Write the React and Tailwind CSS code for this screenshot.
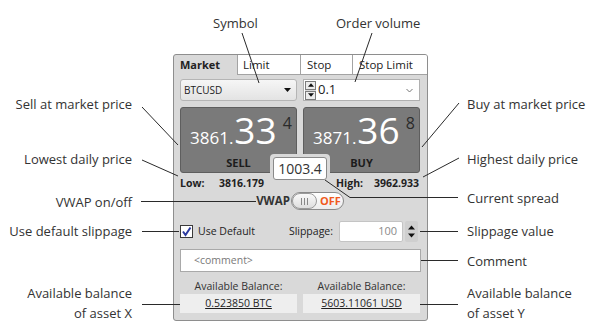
import React from 'react';

const font = { fontFamily: '"Open Sans", "Noto Sans", sans-serif' };

const Tri = ({ up, w = 7, h = 4 }) => (
  <svg width={w} height={h} viewBox="0 0 7 4">
    <path d={up ? 'M0 4 L3.5 0 L7 4Z' : 'M0 0 L7 0 L3.5 4Z'} fill="#111" />
  </svg>
);

const PriceButton = ({ head, big, tail, label }) => (
  <div className="w-[117px] h-[66px] flex flex-col bg-[#7a7a7a] border border-[#5e5e5e] rounded-[3px]">
    <div className="flex items-baseline pl-[9px] pt-[3px]">
      <span className="text-[17px] leading-none text-white">{head}</span>
      <span className="text-[37px] leading-none text-white ml-[1px]">{big}</span>
      <span className="self-start mt-[4px] ml-[6px] text-[16px] leading-none text-[#2a2a2a]">{tail}</span>
    </div>
    <div className="mt-auto pb-[2px] text-center text-[11px] leading-[14px] font-bold text-[#1c1c1c]">{label}</div>
  </div>
);

const TradePanel = () => (
  <div className="w-[255px] h-[267px] flex flex-col bg-[#d9d9d9] border border-[#8e8e8e] rounded-[3px] overflow-hidden text-[#222]">
    <div className="flex h-[20px] shrink-0 text-[11.5px] leading-[19px]">
      <div className="w-[63px] pl-[6px] font-bold text-[11px]">Market</div>
      <div className="w-[63px] pl-[5px] bg-white border-l border-b border-[#a3a3a3]">Limit</div>
      <div className="w-[52px] pl-[6px] bg-white border-l border-b border-[#a3a3a3]">Stop</div>
      <div className="w-[75px] pl-[6px] bg-white border-l border-b border-[#a3a3a3]">Stop Limit</div>
    </div>

    <div className="flex flex-col pl-[6px] w-[246px]">
      <div className="flex gap-[6px] mt-[4px] h-[22px]">
        <div className="w-[117px] flex items-center justify-between pl-[3px] pr-[5px] rounded-[3px] border border-[#b5b5b5] bg-gradient-to-b from-[#f6f6f6] to-[#e3e3e3]">
          <span className="text-[10px]">BTCUSD</span>
          <Tri />
        </div>
        <div className="w-[117px] flex items-center bg-white border border-[#b0b0b0]">
          <div className="flex flex-col gap-[1px] ml-[1px] bg-[#d9d9d9]">
            <div className="w-[11px] h-[9px] flex items-center justify-center border border-[#7c7c7c] bg-[#ececec]"><Tri up w={6} h={4} /></div>
            <div className="w-[11px] h-[9px] flex items-center justify-center border border-[#7c7c7c] bg-[#ececec]"><Tri w={6} h={4} /></div>
          </div>
          <span className="ml-[2px] text-[13px]">0.1</span>
          <svg className="ml-auto mr-[6px]" width="7" height="5" viewBox="0 0 7 5">
            <path d="M0.5 1 L3.5 4 L6.5 1" fill="none" stroke="#777" strokeWidth="1" />
          </svg>
        </div>
      </div>

      <div className="relative flex gap-[6px] mt-[6px]">
        <PriceButton head="3861." big="33" tail="4" label="SELL" />
        <PriceButton head="3871." big="36" tail="8" label="BUY" />
        <div className="absolute left-[90px] top-[47px] p-[3px] bg-[#d9d9d9] rounded-[4px]">
          <div className="w-[54px] h-[23px] flex items-center justify-center bg-white border border-[#8a8a8a] rounded-[3px] text-[14px] text-[#333]">1003.4</div>
        </div>
      </div>

      <div className="flex mt-[3px] h-[14px] text-[10.5px] leading-[14px] font-bold">
        <div className="w-[123px] flex">
          <span className="w-[39px]">Low:</span>
          <span>3816.179</span>
        </div>
        <div className="flex pl-[33px]">
          <span className="w-[38px]">High:</span>
          <span>3962.933</span>
        </div>
      </div>

      <div className="flex justify-center items-center mt-[2px] h-[18px]">
        <span className="text-[11.5px] font-bold text-[#333] mr-[1px]">VWAP</span>
        <div className="w-[53px] h-[18px] flex items-center rounded-full border border-[#8a8a8a] bg-gradient-to-b from-white to-[#ececec]">
          <div className="w-[25px] h-[16px] flex items-center justify-center gap-[2px] rounded-full border border-[#9a9a9a] bg-gradient-to-b from-[#fafafa] to-[#dedede]">
            <span className="w-px h-[7px] bg-[#888]" />
            <span className="w-px h-[7px] bg-[#888]" />
            <span className="w-px h-[7px] bg-[#888]" />
          </div>
          <span className="ml-[3px] text-[11px] font-bold text-[#f05a1e]">OFF</span>
        </div>
      </div>

      <div className="flex items-center mt-[11px] h-[21px] w-[240px]">
        <div className="w-[13px] h-[13px] flex items-center justify-center bg-white border border-[#3a3a3a]">
          <svg width="11" height="11" viewBox="0 0 11 11">
            <path d="M2 5.5 L4.5 9 L9.5 1.5" fill="none" stroke="#2b3aa0" strokeWidth="2" />
          </svg>
        </div>
        <span className="ml-[5px] text-[10.5px]">Use Default</span>
        <span className="ml-auto text-[10.5px]">Slippage:</span>
        <div className="ml-[6px] w-[64px] h-[21px] flex items-center justify-end pr-[5px] bg-white border border-[#c4c4c4] rounded-[2px] text-[11px] text-[#8a8a8a]">100</div>
        <div className="ml-[2px] mr-[2px] w-[13px] h-[21px] flex flex-col items-center justify-center gap-[3px] bg-[#cfcfcf] rounded-[2px]">
          <Tri up w={7} h={5} />
          <Tri w={7} h={5} />
        </div>
      </div>

      <div className="mt-[7px] h-[23px] w-[241px] flex items-center pl-[13px] bg-white border border-[#a9a9a9] text-[10.5px] text-[#7a7a7a]">&lt;comment&gt;</div>

      <div className="grid grid-cols-2 gap-x-[6px] mt-[7px] text-[10.5px] text-[#333]">
        <div className="h-[14px] leading-[14px] text-center">Available Balance:</div>
        <div className="h-[14px] leading-[14px] text-center">Available Balance:</div>
        <div className="mt-[1px] h-[19px] leading-[19px] bg-[#eeeeee] text-center text-[#1f1f1f] underline">0.523850 BTC</div>
        <div className="mt-[1px] h-[19px] leading-[19px] bg-[#eeeeee] text-center text-[#1f1f1f] underline">5603.11061 USD</div>
      </div>
    </div>
  </div>
);

const leftNotes = [
  { text: 'Sell at market price', top: 94 },
  { text: 'Lowest daily price', top: 149 },
  { text: 'VWAP on/off', top: 192 },
  { text: 'Use default slippage', top: 221 },
];

const rightNotes = [
  { text: 'Buy at market price', top: 94 },
  { text: 'Highest daily price', top: 149 },
  { text: 'Current spread', top: 188 },
  { text: 'Slippage value', top: 221 },
  { text: 'Comment', top: 251 },
];

const lines = [
  'M242 33 L259 83',
  'M372 33 L355 82',
  'M142 107 L178 145',
  'M142 160 L178 176',
  'M459 103 L422 147',
  'M459 158 L423 177',
  'M141 201.5 L256 201.5',
  'M142 231.5 L179 231.5',
  'M142 304.5 L180 304.5',
  'M325 180 L350 197.5 L458 197.5',
  'M420 231.5 L458 231.5',
  'M421 260.5 L458 260.5',
  'M420 304.5 L458 304.5',
];

const note = 'text-[13px] leading-[20px] text-[#333] whitespace-nowrap';

export default function App() {
  return (
    <div className="relative w-[600px] h-[332px] bg-white overflow-hidden" style={font}>
      <div className="pt-[54px] pl-[173px]">
        <TradePanel />
      </div>

      <div className={`absolute left-[213px] top-[13px] ${note}`}>Symbol</div>
      <div className={`absolute left-[336px] top-[13px] ${note}`}>Order volume</div>

      {leftNotes.map((n) => (
        <div key={n.text} className={`absolute right-[468px] text-right ${note}`} style={{ top: n.top }}>
          {n.text}
        </div>
      ))}
      <div className={`absolute right-[468px] top-[283px] text-right ${note}`}>
        <div>Available balance</div>
        <div>of asset X</div>
      </div>

      {rightNotes.map((n) => (
        <div key={n.text} className={`absolute left-[467px] ${note}`} style={{ top: n.top }}>
          {n.text}
        </div>
      ))}
      <div className={`absolute left-[467px] top-[283px] ${note}`}>
        <div>Available balance</div>
        <div>of asset Y</div>
      </div>

      <svg className="absolute inset-0 pointer-events-none" width="600" height="332">
        {lines.map((d) => (
          <path key={d} d={d} fill="none" stroke="#2a2a2a" strokeWidth="1" />
        ))}
      </svg>
    </div>
  );
}
